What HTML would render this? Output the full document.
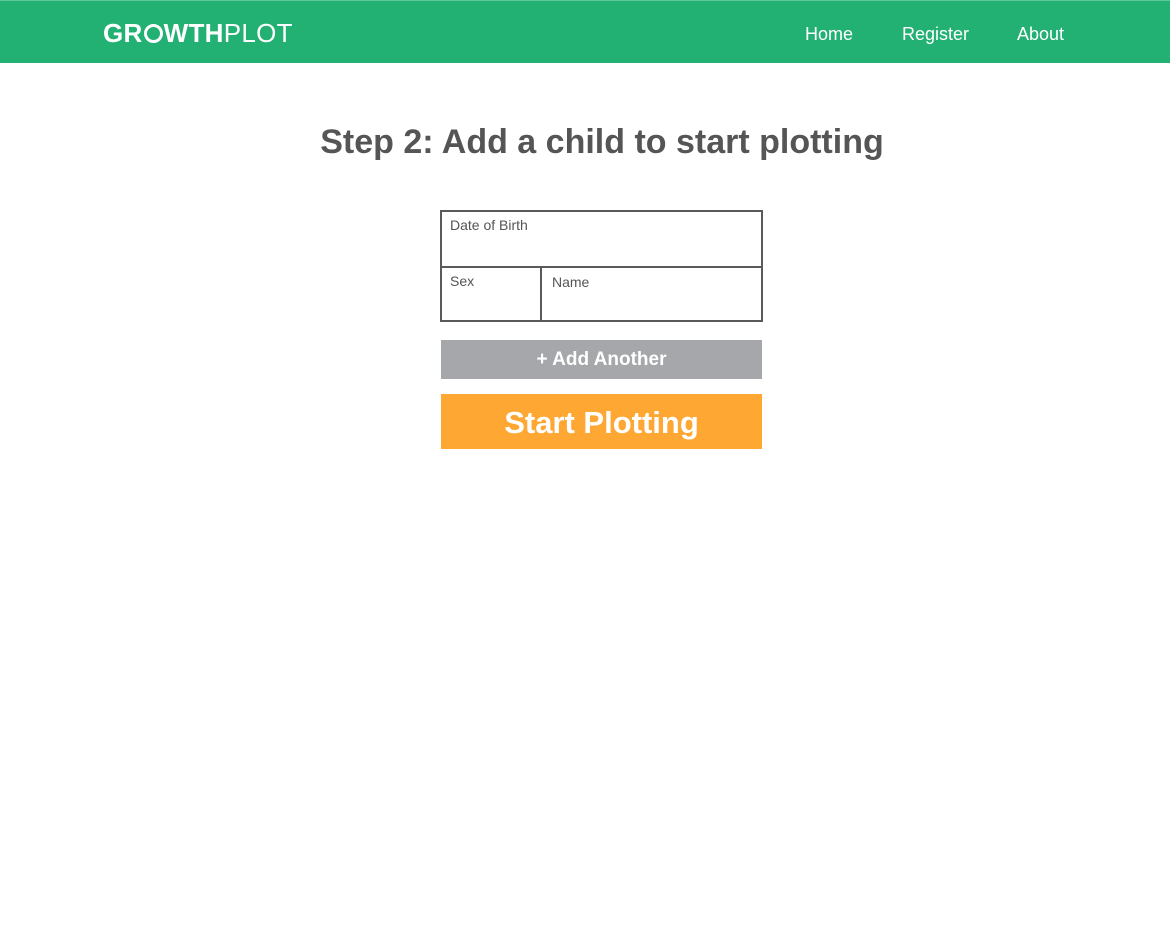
<!DOCTYPE html>
<html><head><style>
body{margin:0;width:1170px;height:938px;background:#fff;font-family:"Liberation Sans",sans-serif;position:relative;overflow:hidden}
.hdr{position:absolute;left:0;top:0;width:1170px;height:63px;background:#22b073;border-top:1px solid #5cc79a;box-sizing:border-box}
.logo{position:absolute;left:103px;top:17px;color:#fff;font-size:26px;letter-spacing:0.3px}
.logo b{font-weight:bold}
.nav{position:absolute;top:23px;color:#fff;font-size:18px}
h1{position:absolute;left:0;width:1204px;text-align:center;top:123px;margin:0;font-size:34px;color:#555;font-weight:bold}
.box{position:absolute;left:440px;top:210px;width:323px;height:112px;border:2px solid #5a5a5a;box-sizing:border-box}
.lbl{position:absolute;font-size:14px;color:#555}
.bt{position:absolute;left:441px;width:321px;color:#fff;font-weight:bold;text-align:center}
</style></head><body>
<div class="hdr">
<div class="logo"><b>GR<span style="display:inline-block;width:19px;height:19px;border:3.5px solid #fff;border-radius:50%;box-sizing:border-box;vertical-align:-1px;margin:0 1px"></span>WTH</b>PLOT</div>
<div class="nav" style="left:805px">Home</div>
<div class="nav" style="left:902px">Register</div>
<div class="nav" style="left:1017px">About</div>
</div>
<h1>Step 2: Add a child to start plotting</h1>
<div class="box">
<div style="position:absolute;left:0;right:0;top:54px;border-top:2px solid #5a5a5a"></div>
<div style="position:absolute;left:98px;top:55px;bottom:0;border-left:2px solid #5a5a5a"></div>
<div class="lbl" style="left:8px;top:5px">Date of Birth</div>
<div class="lbl" style="left:8px;top:61px">Sex</div>
<div class="lbl" style="left:110px;top:62px">Name</div>
</div>
<div class="bt" style="top:340px;height:39px;line-height:40px;background:#a6a7aa;font-size:19px">+ Add Another</div>
<div class="bt" style="top:394px;height:55px;line-height:58px;background:#ffa733;font-size:31px">Start Plotting</div>
</body></html>
